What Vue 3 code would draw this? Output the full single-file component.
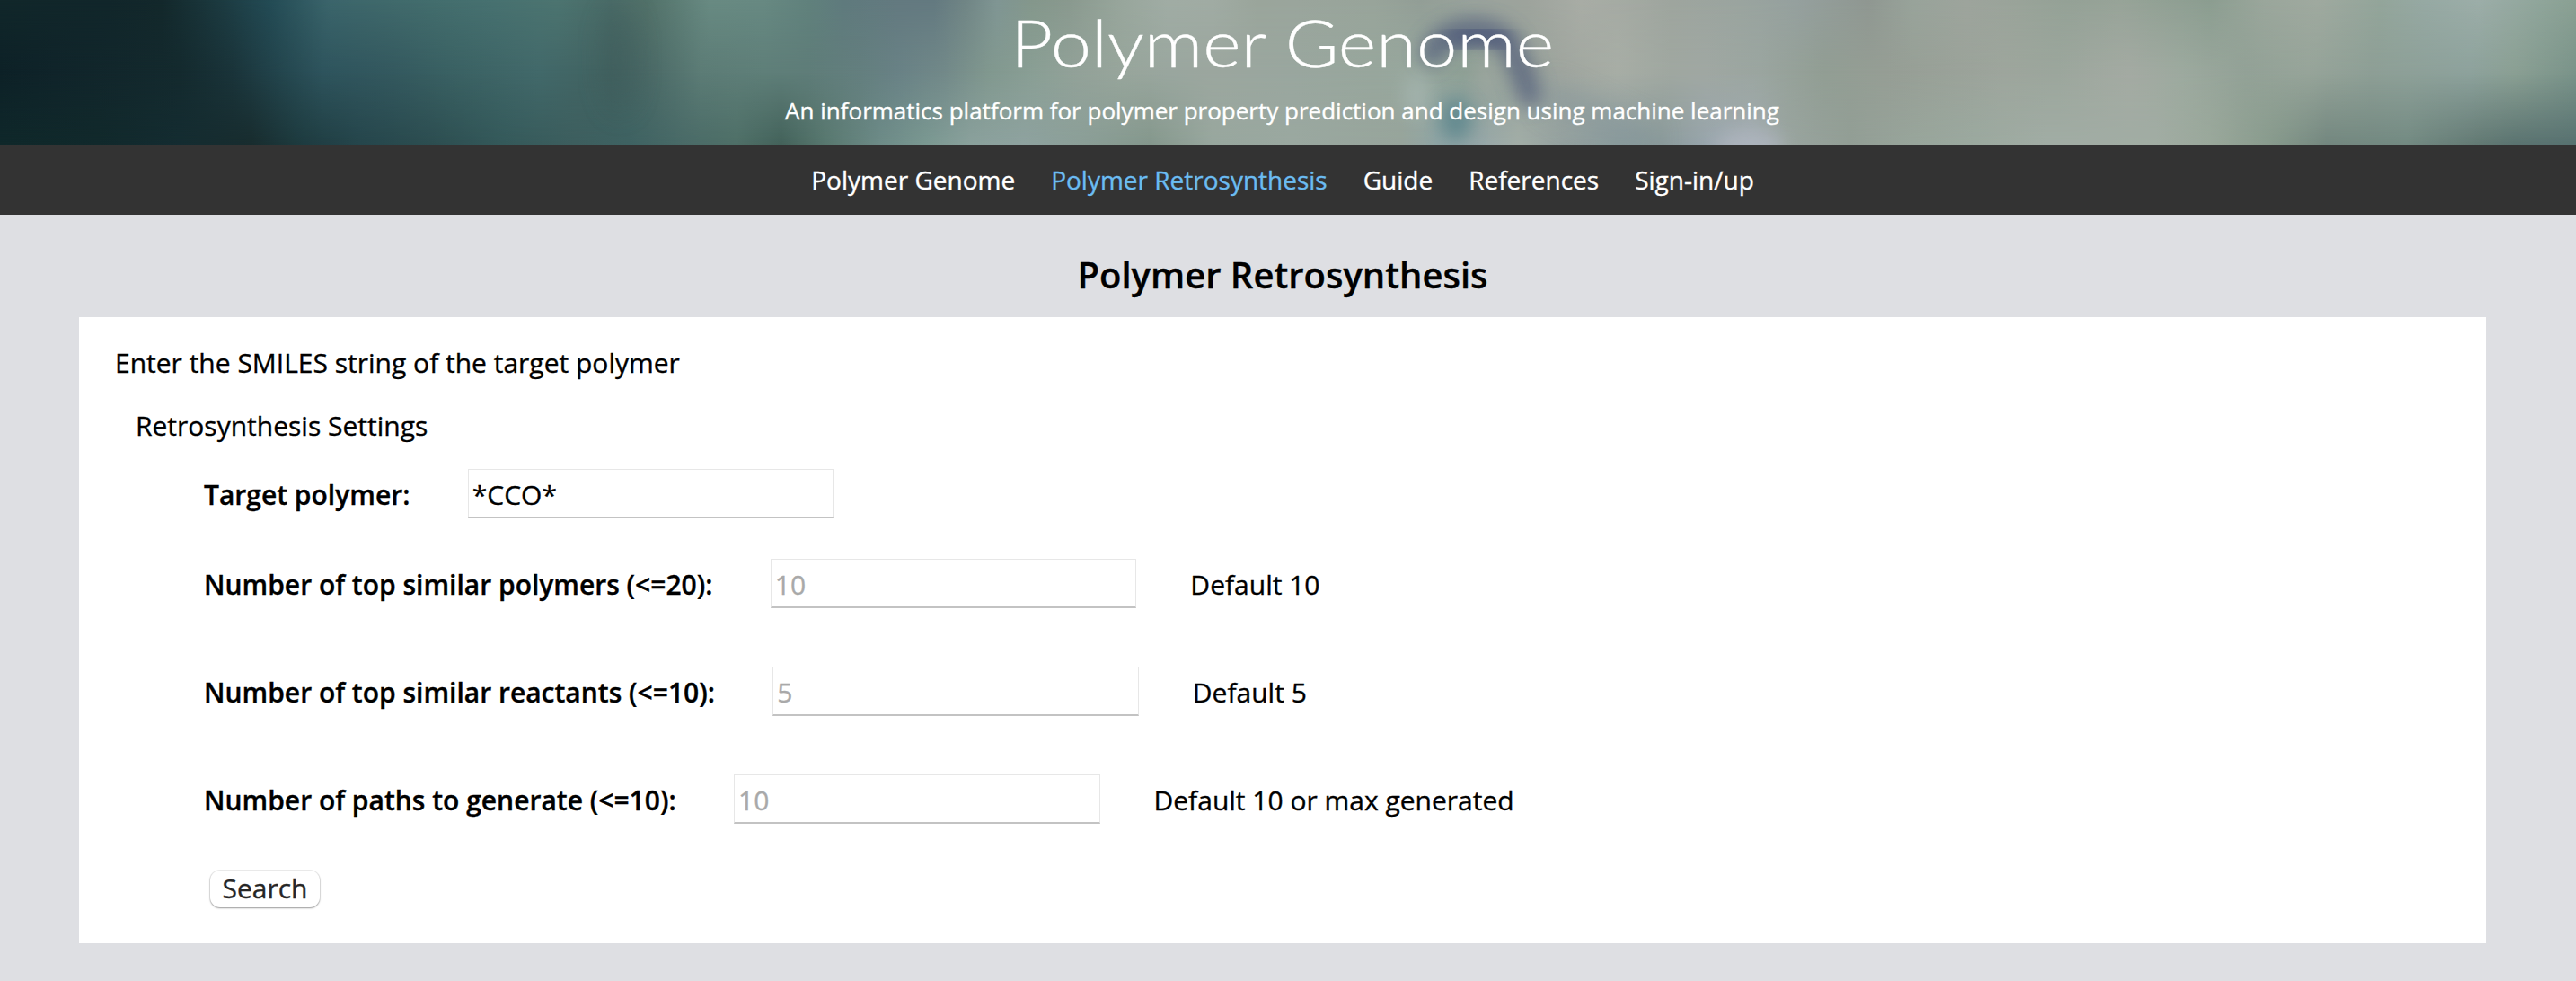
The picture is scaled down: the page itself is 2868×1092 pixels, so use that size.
<script setup>
const navItems = [
  { label: 'Polymer Genome' },
  { label: 'Polymer Retrosynthesis', active: true },
  { label: 'Guide' },
  { label: 'References' },
  { label: 'Sign-in/up' },
]

const fields = [
  { id: 'target', label: 'Target polymer:', value: '*CCO*', placeholder: '', note: '' },
  { id: 'polymers', label: 'Number of top similar polymers (<=20):', value: '', placeholder: '10', note: 'Default 10' },
  { id: 'reactants', label: 'Number of top similar reactants (<=10):', value: '', placeholder: '5', note: 'Default 5' },
  { id: 'paths', label: 'Number of paths to generate (<=10):', value: '', placeholder: '10', note: 'Default 10 or max generated' },
]
</script>

<template>
  <div class="page">
    <header class="banner">
      <div class="layer middle"></div>
      <div class="layer upper"></div>
      <div class="layer lower"></div>
      <svg class="layer" viewBox="0 0 2868 161" preserveAspectRatio="none" aria-hidden="true">
        <defs>
          <filter id="soft" x="-50%" y="-50%" width="200%" height="200%"><feGaussianBlur stdDeviation="10" /></filter>
          <filter id="softer" x="-80%" y="-80%" width="260%" height="260%"><feGaussianBlur stdDeviation="15" /></filter>
        </defs>
        <path d="M1594 60C1606 30 1660 24 1680 50C1692 68 1697 88 1704 106" fill="none" stroke="#4d5979" stroke-width="27" stroke-linecap="round" opacity=".68" filter="url(#soft)" />
        <path d="M1615 48Q1648 28 1676 50" fill="none" stroke="#4b5778" stroke-width="24" opacity=".75" filter="url(#soft)" />
        <ellipse cx="1656" cy="86" rx="14" ry="22" fill="#a6aaa5" opacity=".45" filter="url(#soft)" />
        <ellipse cx="1577" cy="107" rx="14" ry="25" fill="#a6b6b0" opacity=".75" filter="url(#soft)" />
        <ellipse cx="1621" cy="133" rx="18" ry="25" fill="#54828a" opacity=".75" filter="url(#soft)" />
        <path d="M1720 105L1840 158" stroke="#80939a" stroke-width="26" opacity=".5" filter="url(#softer)" />
        <ellipse cx="1948" cy="164" rx="38" ry="20" fill="#b2b8c2" opacity=".7" filter="url(#soft)" />
        <ellipse cx="690" cy="66" rx="18" ry="60" fill="#3c5a5a" opacity=".4" filter="url(#softer)" />
      </svg>
      <div class="titles">
        <h1>Polymer Genome</h1>
        <p>An informatics platform for polymer property prediction and design using machine learning</p>
      </div>
    </header>

    <nav class="nav">
      <a v-for="item in navItems" :key="item.label" :class="{ active: item.active }">{{ item.label }}</a>
    </nav>

    <main>
      <h2>Polymer Retrosynthesis</h2>
      <section class="card">
        <p class="intro">Enter the SMILES string of the target polymer</p>
        <p class="settings">Retrosynthesis Settings</p>
        <form @submit.prevent>
          <div v-for="field in fields" :key="field.id" class="row" :class="field.id">
            <label :for="field.id">{{ field.label }}</label>
            <input :id="field.id" type="text" :value="field.value" :placeholder="field.placeholder" />
            <span v-if="field.note" class="note">{{ field.note }}</span>
          </div>
          <button type="submit">Search</button>
        </form>
      </section>
    </main>
  </div>
</template>

<style>
html,
body {
  margin: 0;
  background: #dedfe3;
}
</style>

<style scoped>
.page {
  min-height: 1092px;
  background: #dedfe3;
  color: #000;
  font: 400 30px/40px "Open Sans", sans-serif;
  -webkit-text-stroke: 0.35px;
}

h1,
h2,
p {
  margin: 0;
}

.banner {
  position: relative;
  height: 161px;
  overflow: hidden;
}

.layer {
  position: absolute;
  inset: 0;
  width: 2868px;
  height: 161px;
}

.middle {
  background: linear-gradient(90deg, #0d2127 0, #10242a 60px, #142a2e 200px, #1a343a 260px, #23454d 310px, #2e545d 360px, #34595f 440px, #3a6163 500px, #42696a 600px, #426260 680px, #4a6966 720px, #5c7c76 780px, #5f7f79 850px, #5f7d79 900px, #647f7f 960px, #698286 1000px, #728989 1050px, #81988f 1100px, #8a9f95 1150px, #93a299 1200px, #98a69c 1250px, #9aa79f 1300px, #9ca79f 1350px, #9aa79f 1440px, #98a79d 1530px, #98a89e 1580px, #8ea095 1630px, #98a39b 1700px, #a0a69f 1740px, #a8aea6 1800px, #a0a8a1 1860px, #a0a8a3 1900px, #9ba6a0 1960px, #929e94 2030px, #969e95 2100px, #9ea69d 2230px, #9ca79d 2290px, #a4aba3 2370px, #9daa9f 2430px, #93a297 2500px, #97a59a 2570px, #8e9f96 2640px, #8ea39d 2750px, #8ba094 2800px, #7a948a 2868px);
}

.upper {
  background: linear-gradient(90deg, #11272a 0, #11262a 120px, #13282b 180px, #1c3a40 245px, #234b55 300px, #3b656b 367px, #40696b 430px, #436d6d 480px, #477170 550px, #4c7470 620px, #4a6b67 680px, #527169 720px, #688a82 790px, #678982 850px, #60817c 900px, #5f7a7d 940px, #63797f 1000px, #637980 1040px, #708585 1075px, #7f9593 1110px, #84978b 1150px, #89998e 1190px, #98a69c 1250px, #a0aca4 1300px, #a0aba3 1350px, #9aa59b 1400px, #9aa59c 1440px, #98a49a 1530px, #929e96 1580px, #9aa39c 1640px, #9da39c 1700px, #a8aca5 1760px, #a5aaa3 1800px, #9ea59e 1860px, #9aa49f 1940px, #95a09e 2000px, #8f9791 2080px, #98a39a 2130px, #9da49c 2190px, #99a399 2250px, #94a196 2300px, #97a398 2360px, #8b9d90 2460px, #9aa69b 2520px, #9fa99f 2580px, #93a59a 2650px, #96a9a3 2700px, #9cada8 2760px, #8fa59a 2830px, #8aa093 2868px);
  mask-image: linear-gradient(#000 0, transparent 80px);
}

.lower {
  background: linear-gradient(90deg, #0f282a 0, #11292b 110px, #142c31 200px, #182c2e 280px, #1d3a3e 330px, #25454b 400px, #2c4d50 480px, #34595a 560px, #3d5e5e 640px, #3e6262 700px, #496a67 760px, #4e6f67 820px, #43625a 870px, #58786f 920px, #6d8b87 980px, #7a9891 1030px, #8aa19c 1080px, #8ea29f 1140px, #8b9f98 1200px, #84978c 1280px, #98a79e 1350px, #9aa8a0 1440px, #97a49b 1560px, #90a5a5 1600px, #97a7a8 1650px, #a2ada7 1690px, #94a19f 1740px, #8b9b9c 1800px, #8a9a9a 1850px, #98a5ac 1900px, #a0aab0 1950px, #99a49f 1990px, #929e95 2060px, #98a59b 2130px, #9ba99f 2200px, #a1aca4 2280px, #a1aca3 2400px, #9aa89b 2460px, #879a8c 2530px, #73877f 2590px, #738a82 2680px, #627973 2760px, #5a7370 2800px, #577170 2868px);
  mask-image: linear-gradient(transparent 80px, #000 161px);
}

.titles {
  position: relative;
  display: flex;
  flex-direction: column;
  align-items: center;
  gap: 9px;
  padding-right: 13px;
  color: #fff;
  white-space: nowrap;
}

h1 {
  font: 300 73px/94px Lato, sans-serif;
  transform: scaleX(1.113);
}

.titles p {
  font-size: 26px;
}

.nav {
  display: flex;
  justify-content: center;
  gap: 40px;
  height: 78px;
  padding-right: 12px;
  background: #333;
  color: #fff;
  font-size: 28px;
  line-height: 78px;
}

.nav .active {
  color: #6bbcf2;
}

main {
  padding: 0 100px 42px 88px;
}

h2 {
  padding-top: 19px;
  font-size: 40px;
  font-weight: 600;
  line-height: 95px;
  text-align: center;
}

.card {
  box-sizing: border-box;
  height: 697px;
  padding: 31px 40px 0;
  background: #fff;
}

.settings {
  margin: 30px 0 28px 23px;
}

form {
  padding-left: 99px;
}

.row {
  display: flex;
  height: 55px;
  margin-bottom: 65px;
}

.row.target {
  margin-bottom: 45px;
}

.row.paths {
  margin-bottom: 52px;
}

label,
.note {
  padding-top: 2px;
  line-height: 54px;
}

label {
  margin-right: 64.4px;
  font-weight: 600;
}

input {
  box-sizing: border-box;
  width: 407.5px;
  height: 55px;
  margin: 0;
  padding: 2px 4px 0;
  border: 1px solid #e7e7e7;
  border-bottom: 2px solid #c3c3c3;
  border-radius: 0;
  outline: 0;
  background: #fff;
  color: #000;
  font: inherit;
}

input::placeholder {
  color: #a9a9a9;
  opacity: 1;
}

.note {
  margin-left: 60px;
}

button {
  display: block;
  box-sizing: border-box;
  width: 122px;
  height: 41px;
  margin: 0 0 0 7px;
  padding: 0 0 2px;
  border: 0;
  border-radius: 11px;
  background: #fff;
  box-shadow: 0 0 0 1px rgba(0, 0, 0, 0.07), 0 1px 2px rgba(0, 0, 0, 0.35);
  color: #262626;
  font: 400 30px/39px "Open Sans", sans-serif;
}
</style>
